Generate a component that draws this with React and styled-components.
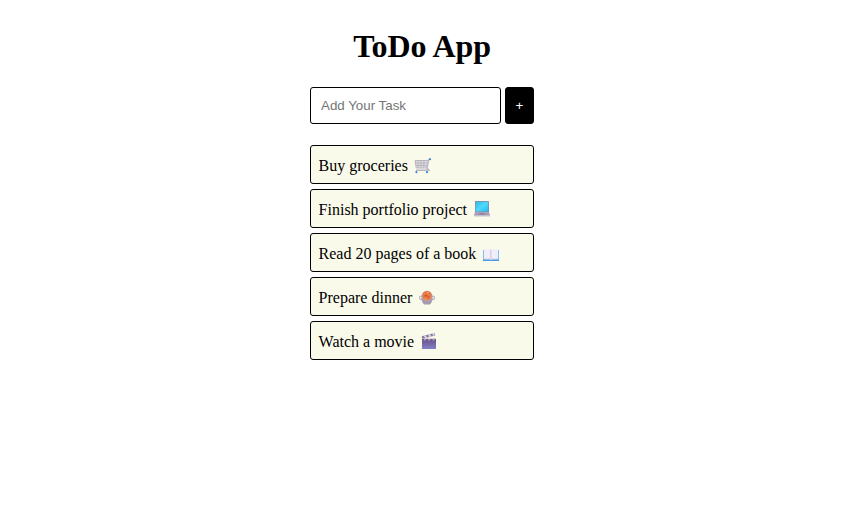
import React from 'react';
import styled, { createGlobalStyle } from 'styled-components';

const GlobalStyle = createGlobalStyle`
  body {
    margin: 0;
    background: #fff;
    color: #000;
    font-family: "Liberation Serif", "Times New Roman", serif;
  }
`;

const Page = styled.main`
  box-sizing: border-box;
  width: 844px;
  padding-top: 28px;
  display: flex;
  flex-direction: column;
  align-items: center;
`;

const Title = styled.h1`
  margin: 0 0 22px;
  font-size: 32px;
  line-height: 37px;
  font-weight: bold;
  letter-spacing: -0.1px;
`;

const TaskForm = styled.form`
  display: flex;
  gap: 4px;
  width: 224px;
  height: 37px;
  margin-bottom: 21px;
`;

const TaskInput = styled.input`
  box-sizing: border-box;
  flex: 1;
  min-width: 0;
  padding: 10px;
  border: 1px solid #000;
  border-radius: 3px;
  font: 13.333px "Liberation Sans", Arial, sans-serif;
  outline: none;

  &::placeholder {
    color: #757575;
  }
`;

const AddButton = styled.button`
  width: 29px;
  padding: 0;
  border: 1px solid #000;
  border-radius: 3px;
  background: #000;
  color: #fff;
  font: 13.333px "Liberation Sans", Arial, sans-serif;
`;

const TaskList = styled.ul`
  display: flex;
  flex-direction: column;
  gap: 5px;
  width: 224px;
  margin: 0;
  padding: 0;
  list-style: none;
`;

const TaskItem = styled.li`
  box-sizing: border-box;
  display: flex;
  align-items: center;
  height: 39px;
  padding: 3px 7px 0 7.6px;
  border: 1px solid #000;
  border-radius: 3px;
  background: #fafaeb;
  font-size: 16px;
  line-height: 18px;
`;

const TaskText = styled.span`
  white-space: pre;
`;

const Icon = styled.svg`
  flex: none;
  width: 18px;
  height: 20px;
  margin-left: 6px;
`;

const CartIcon = () => (
  <Icon viewBox="0 0 18 20">
    <path d="M1 4.5h12.5l-1 7.5H2.2z" fill="#e2e0e4" />
    <path d="M1 4.5h12.8M1.4 7h12M1.8 9.5h11.4M4 4.5l.4 7.5M7 4.5V12M10 4.5L9.8 12M1.1 4.5L2.2 12h10.5" fill="none" stroke="#b4b1b9" strokeWidth=".9" />
    <path d="M16 3.3l-1.6 1-1.5 7.8 1.9 2.2H2" fill="none" stroke="#bdb6c6" strokeWidth="1.6" />
    <path d="M15 2.2h2v1.8h-2z" fill="#3c86d8" />
    <circle cx="2.4" cy="16.2" r="1.1" fill="#3c86d8" />
    <circle cx="13" cy="16.2" r="1.1" fill="#3c86d8" />
  </Icon>
);

const LaptopIcon = () => (
  <Icon viewBox="0 0 18 20">
    <defs>
      <linearGradient id="screen" x1="0" y1="0" x2="1" y2="1">
        <stop offset="0" stopColor="#35b8e8" />
        <stop offset=".5" stopColor="#4dd9fb" />
        <stop offset="1" stopColor="#28b9ef" />
      </linearGradient>
    </defs>
    <rect x="2" y="1" width="14" height="11.6" rx=".7" fill="#8d819b" />
    <rect x="2.6" y="1.7" width="12.8" height="9.8" fill="url(#screen)" />
    <path d="M2 12.3h14l1 3H1z" fill="#a69db4" />
    <path d="M6.3 13.2h5.4l.4 1.2H5.9z" fill="#877c99" />
    <path d="M1 15.2h16v1.2H1z" fill="#bdb4ca" />
  </Icon>
);

const BookIcon = () => (
  <Icon viewBox="0 0 18 20">
    <path d="M1 6h16v11H1z" fill="#7bc0f3" />
    <path d="M1 15.4h16V17H1z" fill="#4799e4" />
    <path d="M2 5h6L9 6l1-1h6v10.2h-6l-1 .7-1-.7H2z" fill="#f2eef9" />
    <path d="M8 5.2l1 .8v10l-1-.7z" fill="#d6cee4" />
    <path d="M9 6l.8-.8v10.3L9 16z" fill="#e0d9eb" />
    <path d="M2 14.8h6l1 .8 1-.8h6" fill="none" stroke="#d6cee4" strokeWidth=".6" />
  </Icon>
);

const PotIcon = () => (
  <Icon viewBox="0 0 18 20">
    <ellipse cx="3.2" cy="9.8" rx="1.7" ry="1.8" fill="none" stroke="#b5adbf" strokeWidth="1.1" />
    <ellipse cx="14.8" cy="9.8" rx="1.7" ry="1.8" fill="none" stroke="#b5adbf" strokeWidth="1.1" />
    <path d="M3.4 8h11.2q.2 6-2.6 8.4H6Q3.2 14 3.4 8z" fill="#a69caf" />
    <ellipse cx="9" cy="7.9" rx="5.4" ry="5.2" fill="#b7acb8" />
    <ellipse cx="9" cy="7.8" rx="4.8" ry="4.7" fill="#ed7845" />
    <path d="M6.7 7h2.6v1.5H6.7zM9.5 8.4h1.8v1.4H9.5z" fill="#bd5535" />
    <path d="M8.8 4h1.6v1.2H8.8zM7 10.2h1.4v1.2H7z" fill="#f8ac50" />
    <path d="M11.3 6h1.2v1.2h-1.2zM5.1 9h1.1v1.1H5.1z" fill="#b49250" />
  </Icon>
);

const ClapperIcon = () => (
  <Icon viewBox="0 0 18 20">
    <defs>
      <linearGradient id="slate" x1="0" y1="0" x2="0" y2="1">
        <stop offset="0" stopColor="#665184" />
        <stop offset="1" stopColor="#8481c9" />
      </linearGradient>
    </defs>
    <path d="M2 7h14v10H2z" fill="url(#slate)" />
    <path d="M1.7 4.2l12.8-3.3.9 2.5L2.4 6.7z" fill="#8a7aa0" />
    <path d="M3.7 3.7l2-.5 1.4 2.3-2 .5zM8 2.6l2-.5 1.3 2.3-2 .5zM12 1.6l1.9-.5 1 2.3-1.7.4z" fill="#ddd6e8" />
    <path d="M2 6.8h14v2H2z" fill="#715d8b" />
    <path d="M4.7 6.8H6.5l-1.2 1.8H3.5zM9 6.8h1.8L9.6 8.6H7.8zM13.3 6.8h1.8l-1.2 1.8h-1.8z" fill="#b5a9c7" />
  </Icon>
);

const tasks = [
  { text: 'Buy groceries', Glyph: CartIcon },
  { text: 'Finish portfolio project', Glyph: LaptopIcon },
  { text: 'Read 20 pages of a book', Glyph: BookIcon },
  { text: 'Prepare dinner', Glyph: PotIcon },
  { text: 'Watch a movie', Glyph: ClapperIcon },
];

export default function App() {
  return (
    <>
      <GlobalStyle />
      <Page>
        <Title>ToDo App</Title>
        <TaskForm onSubmit={(event) => event.preventDefault()}>
          <TaskInput placeholder="Add Your Task" />
          <AddButton>+</AddButton>
        </TaskForm>
        <TaskList>
          {tasks.map(({ text, Glyph }) => (
            <TaskItem key={text}>
              <TaskText>{text}</TaskText>
              <Glyph />
            </TaskItem>
          ))}
        </TaskList>
      </Page>
    </>
  );
}
